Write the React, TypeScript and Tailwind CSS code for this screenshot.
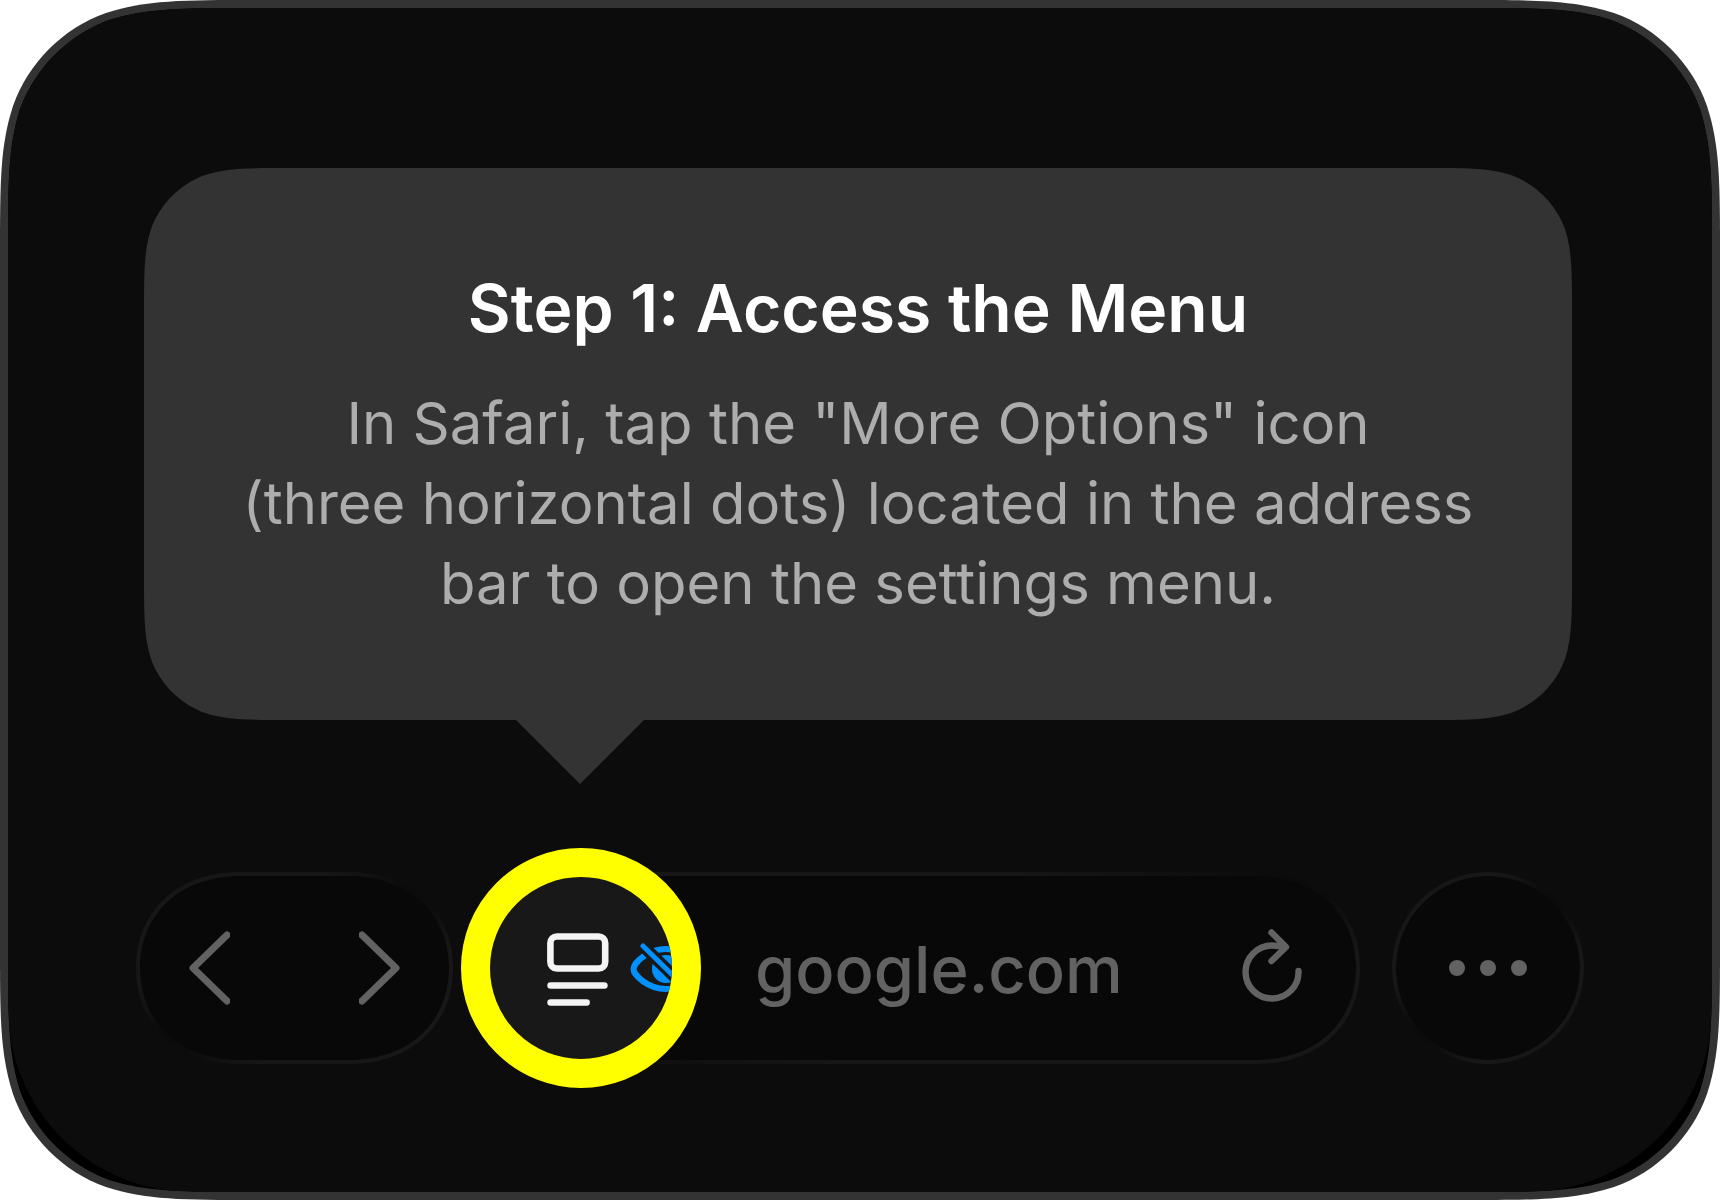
import React from "react";

const pill =
  "border-4 border-transparent [background:linear-gradient(#080808,#080808)_padding-box,linear-gradient(to_bottom_right,#171717_30%,#0b0b0b_46%,#0b0b0b_54%,#171717_70%)_border-box]";
const longPill = "[border-radius:104px/96px] [corner-shape:superellipse(1.1)]";

/** Clip path for a box with continuous ("squircle") corners of radius r. */
function continuousCorners(r: number) {
  const n = (k: number) => `${Math.round(k * r)}px`;
  const f = (k: number) => `calc(100% - ${n(k)})`;
  const [a, b, c, d, e, g, h] = [1.52866, 1.08849, 0.8684, 0.63149, 0.37282, 0.16906, 0.07491];
  const clipPath = `shape(from ${n(a)} 0px, hline to ${f(a)},
    curve to ${f(d)} ${n(h)} with ${f(b)} 0px / ${f(c)} 0px,
    curve to ${f(h)} ${n(d)} with ${f(e)} ${n(g)} / ${f(g)} ${n(e)},
    curve to 100% ${n(a)} with 100% ${n(c)} / 100% ${n(b)},
    vline to ${f(a)},
    curve to ${f(h)} ${f(d)} with 100% ${f(b)} / 100% ${f(c)},
    curve to ${f(d)} ${f(h)} with ${f(g)} ${f(e)} / ${f(e)} ${f(g)},
    curve to ${f(a)} 100% with ${f(c)} 100% / ${f(b)} 100%,
    hline to ${n(a)},
    curve to ${n(d)} ${f(h)} with ${n(b)} 100% / ${n(c)} 100%,
    curve to ${n(h)} ${f(d)} with ${n(e)} ${f(g)} / ${n(g)} ${f(e)},
    curve to 0px ${f(a)} with 0px ${f(c)} / 0px ${f(b)},
    vline to ${n(a)},
    curve to ${n(h)} ${n(d)} with 0px ${n(b)} / 0px ${n(c)},
    curve to ${n(d)} ${n(h)} with ${n(g)} ${n(e)} / ${n(e)} ${n(g)},
    curve to ${n(a)} 0px with ${n(c)} 0px / ${n(b)} 0px,
    close)`;
  return { clipPath };
}

function Chevron({ flip = false }: { flip?: boolean }) {
  return (
    <svg width="42" height="74" viewBox="0 0 42 74" fill="none" stroke="#626262" strokeWidth="7" strokeLinecap="round" strokeLinejoin="round" aria-hidden="true">
      <path d={flip ? "M3 4L37 37L3 70" : "M39 4L5 37L39 70"} />
    </svg>
  );
}

function PageIcon() {
  return (
    <svg className="shrink-0" width="62" height="76" viewBox="0 0 62 76" fill="none" stroke="#f4f4f4" strokeWidth="6.6" strokeLinecap="round" aria-hidden="true">
      <rect x="3.4" y="6.5" width="54.8" height="32" rx="6.5" />
      <path d="M3.6 55.5H57.4M3.6 72.5H39.6" />
    </svg>
  );
}

function HiddenEyeIcon() {
  return (
    <svg className="shrink-0" width="72" height="58" viewBox="0 0 72 58" fill="none" stroke="#0091ff" aria-hidden="true">
      <defs>
        <mask id="slash-gap" maskUnits="userSpaceOnUse" x="0" y="0" width="72" height="58">
          <rect width="72" height="58" fill="white" stroke="none" />
          <path d="M13 7L60 53" stroke="black" strokeWidth="12" strokeLinecap="round" />
        </mask>
      </defs>
      <g mask="url(#slash-gap)">
        <path d="M3.5 30C3.5 24 18 10 36 10C54 10 68.5 24 68.5 30C68.5 36 54 50 36 50C18 50 3.5 36 3.5 30Z" strokeWidth="6" />
        <circle cx="36" cy="30" r="14" fill="#0091ff" stroke="none" />
      </g>
      <path d="M13 7L60 53" strokeWidth="5" strokeLinecap="round" />
    </svg>
  );
}

function ReloadIcon() {
  return (
    <svg className="overflow-visible" width="62" height="74" viewBox="0 0 62 74" fill="none" stroke="#626262" strokeWidth="6.4" strokeLinecap="round" strokeLinejoin="round" aria-hidden="true">
      <path d="M57.5 40A26.5 26.5 0 1 1 31 14.5L43 15.5" />
      <path d="M30.5 1.5L45 16L30.5 30" />
    </svg>
  );
}

export default function App() {
  return (
    <main className="flex min-h-screen w-full flex-col bg-[#333333] p-2 font-['Inter',sans-serif]" style={continuousCorners(168)}>
      <div className="flex flex-1 flex-col bg-black" style={continuousCorners(160)}>
        <div className="flex flex-1 flex-col rounded-b-[184px] bg-[#0c0c0c] pt-40">
          <section className="relative mr-[140px] ml-[136px]">
            <div className="bg-[#333333] px-16 pt-[100px] pb-[97px] text-center" style={continuousCorners(96)}>
              <h1 className="text-[66px] leading-[80px] font-semibold text-white">Step 1: Access the Menu</h1>
              <p className="mt-[35px] text-[58px] leading-[80px] text-[#adadad]">
                In Safari, tap the "More Options" icon
                <br />
                (three horizontal dots) located in the address
                <br />
                bar to open the settings menu.
              </p>
            </div>
            <span className="absolute top-full left-[372px] h-16 w-32 bg-[#333333] [clip-path:polygon(0_0,100%_0,50%_100%)]" />
          </section>

          <nav aria-label="Browser toolbar" className="mx-32 mt-[152px] flex h-48 gap-8">
            <div className={`flex w-[317px] items-center justify-between px-[48px] ${pill} ${longPill}`}>
              <button type="button" aria-label="Back">
                <Chevron />
              </button>
              <button type="button" aria-label="Forward">
                <Chevron flip />
              </button>
            </div>

            <div className={`relative flex flex-1 items-center justify-between pr-[53px] pl-[266px] ${pill} ${longPill}`}>
              <button
                type="button"
                aria-label="Page menu"
                className="absolute -top-7 -left-7 flex size-60 items-center gap-[21px] overflow-hidden rounded-full border-[29px] border-[#ffff00] bg-[#181818] pl-[57px]"
              >
                <PageIcon />
                <HiddenEyeIcon />
              </button>
              <a href="#address" className="pt-1 text-[65px] leading-[80px] font-medium text-[#626262]">
                google.com
              </a>
              <button type="button" aria-label="Reload">
                <ReloadIcon />
              </button>
            </div>

            <button type="button" aria-label="More options" className={`flex size-48 items-center justify-center gap-[15px] rounded-full ${pill}`}>
              <span className="size-4 rounded-full bg-[#626262]" />
              <span className="size-4 rounded-full bg-[#626262]" />
              <span className="size-4 rounded-full bg-[#626262]" />
            </button>
          </nav>
        </div>
      </div>
    </main>
  );
}
